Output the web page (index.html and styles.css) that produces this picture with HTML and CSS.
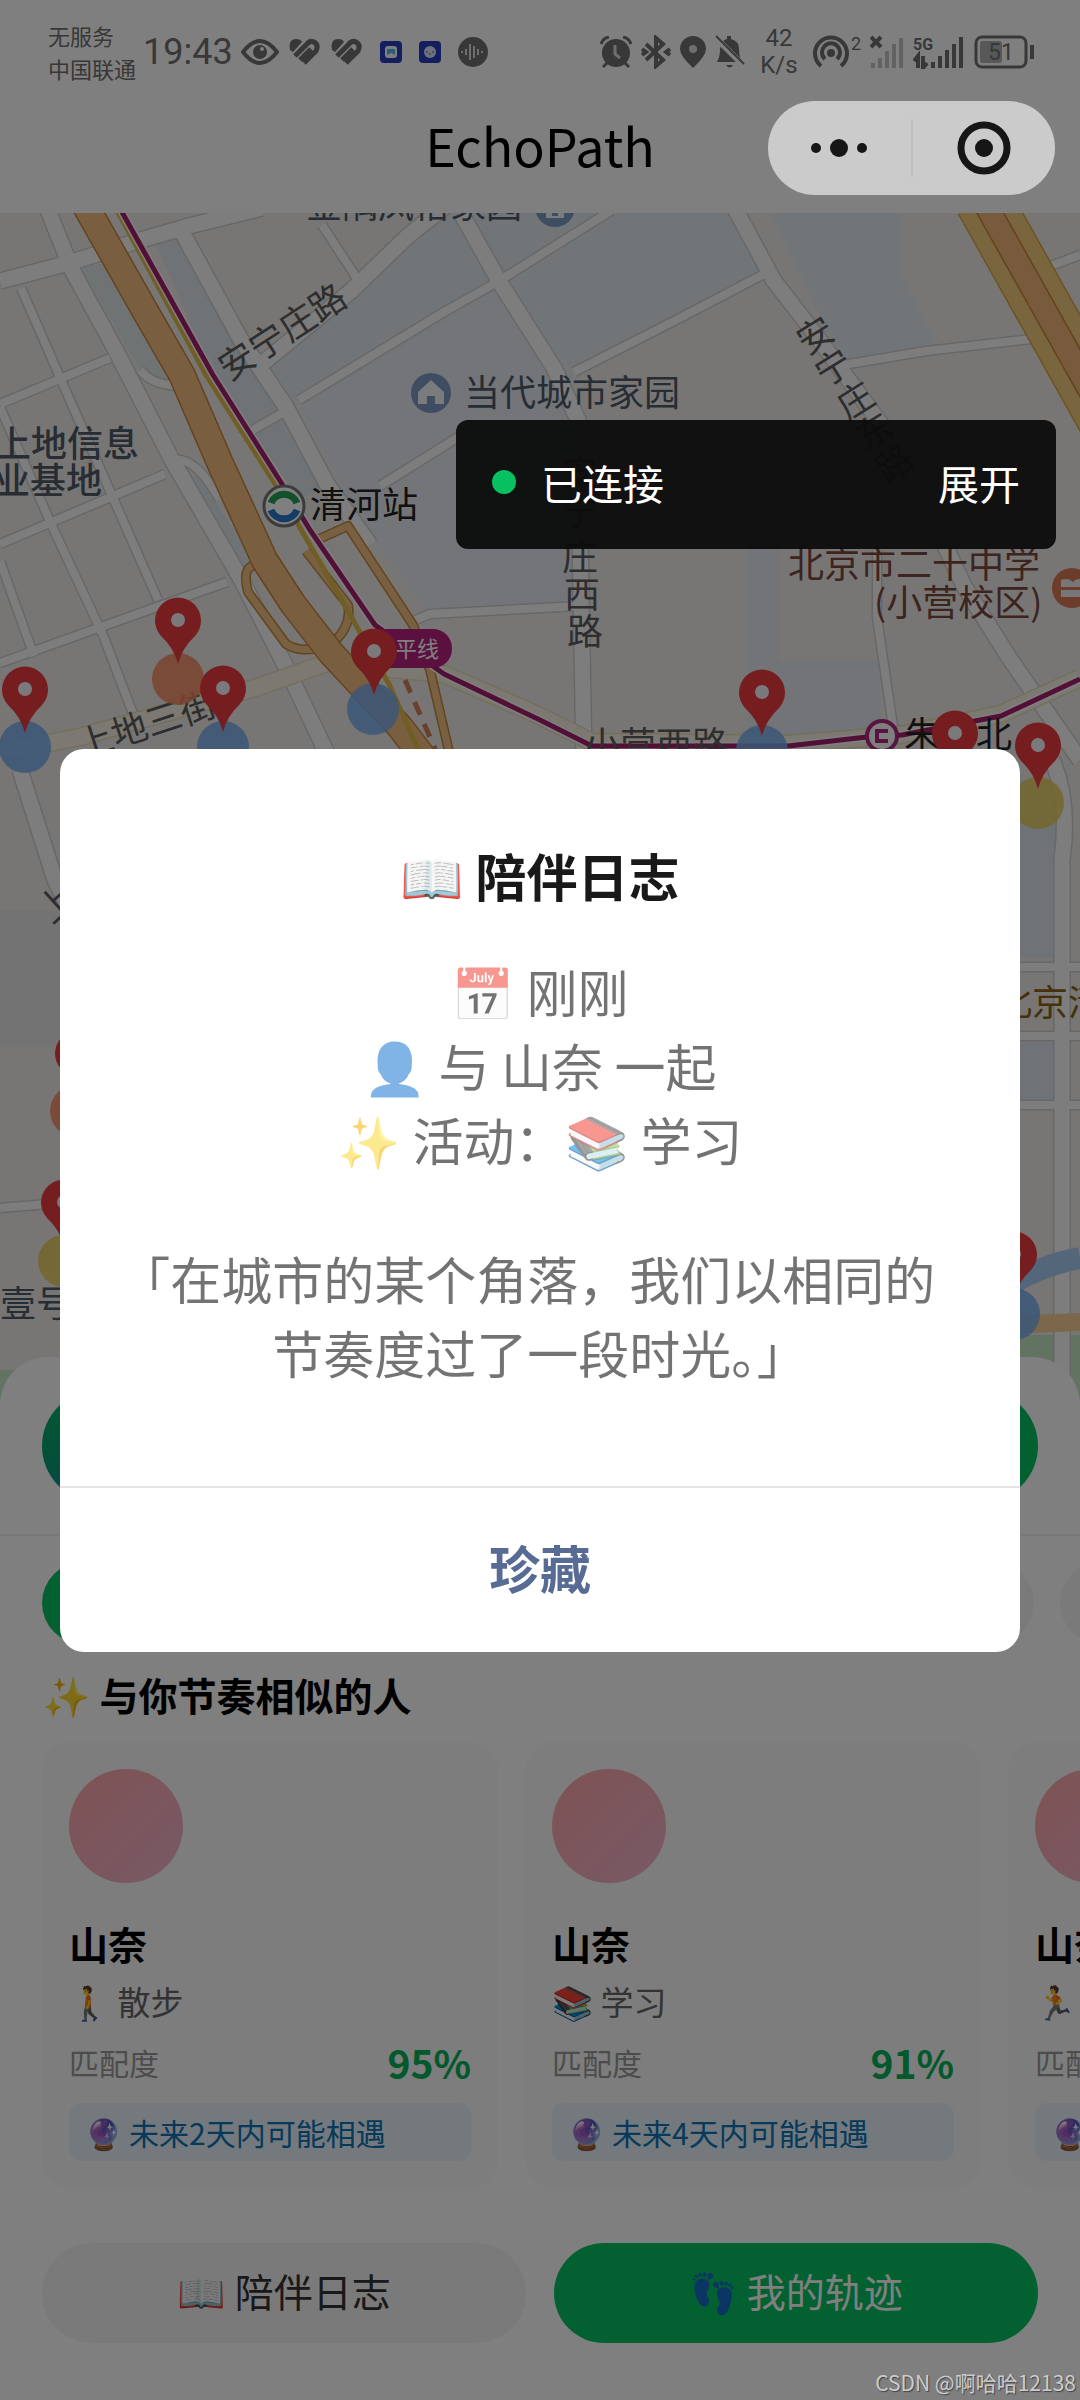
FILE: index.html
```html
<!DOCTYPE html>
<html lang="zh-CN">
<head>
    <meta charset="UTF-8">
    <meta name="viewport" content="width=device-width, initial-scale=1.0">
    <title>EchoPath</title>
    <link rel="stylesheet" href="styles.css">
</head>
<body>
    <div class="page">
        <div class="status-bar">
            <div class="carrier"><span>无服务</span><span>中国联通</span></div>
            <div class="clock">19:43</div>
            <div class="status-icons">
                <svg width="38" height="28" viewBox="0 0 38 28"><path d="M2 14Q19-8 36 14Q19 36 2 14Z" fill="none" stroke="currentColor" stroke-width="4"/><circle cx="19" cy="14" r="7" fill="currentColor"/><circle cx="21" cy="11" r="2" fill="#fff"/></svg>
                <svg width="32" height="28" viewBox="0 0 32 28"><path d="M1 12Q-1 1 7 1Q12 1 13 4L4 14Z" fill="currentColor"/><path d="M6 18L18 6Q21 2 25 4Q30 7 27 13L15 25M11 22L22 11" fill="none" stroke="currentColor" stroke-width="5"/></svg>
                <svg width="32" height="28" viewBox="0 0 32 28"><path d="M1 12Q-1 1 7 1Q12 1 13 4L4 14Z" fill="currentColor"/><path d="M6 18L18 6Q21 2 25 4Q30 7 27 13L15 25M11 22L22 11" fill="none" stroke="currentColor" stroke-width="5"/></svg>
                <svg class="app-icon" width="22" height="22" viewBox="0 0 22 22"><rect width="22" height="22" rx="4" fill="#2a3cbe"/><rect x="5" y="5" width="12" height="12" rx="3" fill="#fff"/><path d="M7 8H15V14L11 12L7 14Z" fill="#54b8f0"/></svg>
                <svg class="app-icon" width="22" height="22" viewBox="0 0 22 22"><rect width="22" height="22" rx="4" fill="#2a3cbe"/><circle cx="11" cy="11" r="6" fill="#dde4ff"/><path d="M8 10V12M14 10V12M10 13H12" stroke="#556"/></svg>
                <svg class="app-icon" width="30" height="30" viewBox="0 0 30 30"><circle cx="15" cy="15" r="15" fill="currentColor"/><path d="M4 14V16M8 12V18M12 7V23M16 9V21M20 12V18M24 14V16" stroke="#ddd" stroke-width="2"/></svg>
            </div>
            <div class="status-right">
                <svg width="32" height="32" viewBox="0 0 32 32"><circle cx="16" cy="17" r="14" fill="currentColor"/><path d="M1 8Q3 2 9 1M31 8Q29 2 23 1M7 27L3 31M25 27L29 31" stroke="currentColor" stroke-width="3" fill="none"/><path d="M15 9V18L20 22" stroke="#ddd" stroke-width="3" fill="none"/></svg>
                <svg width="30" height="34" viewBox="0 0 30 34"><path d="M5 9L22 25L15 31V3L22 9L5 25M1 14L5 17L1 20M29 14L25 17L29 20" fill="none" stroke="currentColor" stroke-width="4"/></svg>
                <svg width="26" height="32" viewBox="0 0 26 32"><path d="M13 32Q0 20 0 13A13 13 0 0 1 26 13Q26 20 13 32Z" fill="currentColor"/><circle cx="13" cy="13" r="4" fill="#ddd"/></svg>
                <svg width="30" height="34" viewBox="0 0 30 34"><path d="M2 27Q5 22 5 14Q6 5 12 4V1H16V4Q24 6 24 14Q24 22 27 27ZM11 30H18Q15 35 11 30Z" fill="currentColor"/><path d="M1 3L28 30" stroke="#fff" stroke-width="6"/><path d="M1 1L29 29" stroke="currentColor" stroke-width="2"/></svg>
                <div class="speed"><span>42</span><span>K/s</span></div>
                <svg width="48" height="34" viewBox="0 0 48 34"><path d="M8 31A16 16 0 1 1 28 31M12 24A9 9 0 1 1 24 24" fill="none" stroke="currentColor" stroke-width="4"/><circle cx="18" cy="18" r="4" fill="currentColor"/><text x="38" y="15" font-size="18" fill="currentColor">2</text></svg>
                <svg width="34" height="34" viewBox="0 0 34 34"><path d="M3 28V33M10 23V33M17 16V33M24 9V33M31 3V33" stroke="#c4c4c4" stroke-width="4"/><path d="M1 2L11 12M11 2L1 12" stroke="currentColor" stroke-width="4"/></svg>
                <svg width="52" height="34" viewBox="0 0 52 34"><text x="0" y="15" font-size="16" font-weight="700" fill="currentColor">5G</text><path d="M1 26L5 21V33M10 21V33L14 28M20 27V33M27 21V33M34 15V33M41 9V33M48 2V33" fill="none" stroke="currentColor" stroke-width="4"/></svg>
                <svg width="62" height="34" viewBox="0 0 62 34"><rect x="2" y="2" width="50" height="30" rx="6" fill="none" stroke="currentColor" stroke-width="3"/><rect x="6" y="6" width="22" height="22" rx="3" fill="#b0b0b0"/><path d="M58 10V24" stroke="currentColor" stroke-width="4"/><text x="14" y="25" font-size="23" fill="currentColor">51</text></svg>
            </div>
        </div>
        <header class="nav-bar"><h1>EchoPath</h1></header>

        <div class="map">
            <svg viewBox="0 213 1080 1200" preserveAspectRatio="xMidYMin slice">
                <defs>
                    <g id="pin">
                        <path d="M0 44Q-4 28-17 16A23 23 0 1 1 17 16Q4 28 0 44Z" fill="#ec3b40"/>
                        <circle r="7" fill="#f4f4f8"/>
                    </g>
                </defs>
                <rect y="213" width="1080" height="1200" fill="#efedeb"/>
                <!-- districts -->
                <path d="M350 213H733L764 274L574 372L540 347L299 400L284 407L241 340L350 291Z" fill="#e5ebf1"/>
                <path d="M152 235L182 225L258 365L327 484L300 500L213 375Z" fill="#dfe6ea"/>
                <path d="M80 266L120 262L190 380L170 385L140 370Z" fill="#dfe6e8"/>
                <path d="M299 407L499 290L574 372V605L430 614L370 537Z" fill="#e7ebf0"/>
                <path d="M190 213H447L351 291L258 365L190 240Z" fill="#efede9"/>
                <path d="M770 213H900V270L940 351L843 362Z" fill="#e5eaef"/>
                <path d="M748 545H780V660H880V735H748Z" fill="#e4e8f0"/>
                <path d="M180 480Q200 465 215 500L258 570L240 572Z" fill="#dfe6ea"/>
                <path d="M0 910H60V1045H0Z" fill="#e6e6e6"/>
                <path d="M1012 780H1058V958H1012ZM1012 1042H1055V1100H1012Z" fill="#dfe5ec"/>
                <path d="M1000 1335H1080V1413H1000ZM0 1370H60V1413H0Z" fill="#c5e6c4"/>
                <!-- streets -->
                <g fill="none" stroke="#cfcfd1" stroke-linejoin="round">
                    <path stroke-width="18" d="M48 210L72 270L114 347L172 460L241 579L286 667L330 760M182 232L241 340L286 407L327 484L370 545M461 213L499 281L554 368L578 420L584 760M733 205L774 281L812 330L900 450L964 586L1008 656L1080 760M0 281L69 263L144 239L193 225L262 208M258 367L351 291L409 235L447 205M20 770L55 880L80 930M1052 760Q1070 800 1062 860V1420"/>
                    <path stroke-width="11" d="M0 404L110 358M0 544L165 474M0 663L227 582M21 288L62 382L158 600M0 407L52 526L103 635L138 727M0 561L34 656M299 400L444 312L499 281L612 210M574 372L678 319L764 274M843 365L926 351L1040 338M877 550V618L895 740M413 621L430 614L580 606M322 225L358 280M140 370Q155 388 185 385M172 460Q195 455 220 500M241 437L284 412M380 486L460 436M1000 967H1080M1000 1036H1080M1000 1105H1080M0 1208L60 1203M1040 270L1080 255"/>
                </g>
                <g fill="none" stroke="#fbfbfc" stroke-linejoin="round">
                    <path stroke-width="15" d="M48 210L72 270L114 347L172 460L241 579L286 667L330 760M182 232L241 340L286 407L327 484L370 545M461 213L499 281L554 368L578 420L584 760M733 205L774 281L812 330L900 450L964 586L1008 656L1080 760M0 281L69 263L144 239L193 225L262 208M258 367L351 291L409 235L447 205M20 770L55 880L80 930M1052 760Q1070 800 1062 860V1420"/>
                    <path stroke-width="8" d="M0 404L110 358M0 544L165 474M0 663L227 582M21 288L62 382L158 600M0 407L52 526L103 635L138 727M0 561L34 656M299 400L444 312L499 281L612 210M574 372L678 319L764 274M843 365L926 351L1040 338M877 550V618L895 740M413 621L430 614L580 606M322 225L358 280M140 370Q155 388 185 385M172 460Q195 455 220 500M241 437L284 412M380 486L460 436M1000 967H1080M1000 1036H1080M1000 1105H1080M0 1208L60 1203M1040 270L1080 255"/>
                </g>
                <path d="M0 752L80 737L255 688L327 663L444 674L540 716L592 742L788 744L900 735L1001 714L1080 678" fill="none" stroke="#e6dfb8" stroke-width="19"/>
                <path d="M0 752L80 737L255 688L327 663L444 674L540 716L592 742L788 744L900 735L1001 714L1080 678" fill="none" stroke="#f6f3e2" stroke-width="16"/>
                <path d="M1000 1290Q1040 1265 1080 1258" fill="none" stroke="#a8cdf5" stroke-width="22"/>
                <path d="M1000 1325L1080 1322" fill="none" stroke="#f6cf92" stroke-width="18"/>
                <!-- expressway and ramps -->
                <g fill="none" stroke-linejoin="round">
                    <path d="M262 565Q240 562 248 592L286 644Q305 656 334 642M317 540L348 526L413 625L430 670L451 760M306 551L348 605Q352 625 334 642" stroke="#c08a3a" stroke-width="10"/>
                    <path d="M262 565Q240 562 248 592L286 644Q305 656 334 642M317 540L348 526L413 625L430 670L451 760M306 551L348 605Q352 625 334 642" stroke="#f4c184" stroke-width="7"/>
                    <path d="M85 205L148 316L182 375L220 463L265 561L293 604L331 653L400 727L427 762" stroke="#c9853c" stroke-width="28"/>
                    <path d="M85 205L148 316L182 375L220 463L265 561L293 604L331 653L400 727L427 762" stroke="#f3bf80" stroke-width="25"/>
                    <path d="M983 200L1185 560" stroke="#d9a745" stroke-width="58"/>
                    <path d="M983 200L1185 560" stroke="#f4cc7c" stroke-width="55"/>
                    <path d="M983 200L1185 560" stroke="#c9853c" stroke-width="25"/>
                    <path d="M983 200L1185 560" stroke="#eeb778" stroke-width="22"/>
                    <path d="M405 680L440 760" stroke="#d08058" stroke-width="5" stroke-dasharray="14 10"/>
                    <path d="M114 205L206 375L275 484L303 533L344 604L389 684L423 760" stroke="#e0bd48" stroke-width="5"/>
                    <path d="M118 205L213 375L282 484L310 530L375 625L444 674L540 720L592 746L788 746L867 737L902 735L1001 716L1080 679" stroke="#fff" stroke-width="8"/>
                    <path d="M118 205L213 375L282 484L310 530L375 625L444 674L540 720L592 746L788 746L867 737L902 735L1001 716L1080 679" stroke="#a5206f" stroke-width="5"/>
                </g>
                <!-- place names -->
                <g class="map-label">
                    <text x="306" y="218">金隅凤怡家园</text>
                    <text x="464" y="406">当代城市家园</text>
                    <text class="dark" x="310" y="518">清河站</text>
                    <text class="district" x="-5" y="457">上地信息</text>
                    <text class="district" x="-6" y="494">业基地</text>
                    <text class="road" transform="translate(229 382) rotate(-33)">安宁庄路</text>
                    <text class="road" transform="translate(82 759) rotate(-18)">上地三街</text>
                    <text class="road" x="807 825 847 866 886" y="356 388 421 452 484" rotate="-32">安宁庄东路</text>
                    <text class="road" x="562 562 562 564 567" y="486 525 570 608 645">安宁庄西路</text>
                    <text class="road" x="584" y="758">小营西路</text>
                    <text class="road" transform="translate(52 925) rotate(-42)">上</text>
                    <text class="school" x="788" y="578">北京市二十中学</text>
                    <text class="school" x="874" y="616">(小营校区)</text>
                    <text class="dark" x="904" y="748">朱房北</text>
                    <text class="gold" x="996" y="1016">北京清</text>
                    <text x="0" y="1317">壹号</text>
                </g>
                <g fill="#7f9bc4">
                    <circle cx="431" cy="393" r="20"/>
                    <circle cx="555" cy="207" r="20"/>
                </g>
                <path d="M431 380L444 392V404H435V396H427V404H418V392Z" fill="#f4f6fa"/>
                <path d="M546 210H552V216H558V210H564V218H546Z" fill="#f4f6fa"/>
                <circle cx="284" cy="506" r="20" fill="#fff" stroke="#777" stroke-width="3"/>
                <path d="M271 503A14 14 0 0 1 297 503" fill="none" stroke="#23a058" stroke-width="7"/>
                <path d="M271 510A14 14 0 0 0 297 510" fill="none" stroke="#2878cc" stroke-width="7"/>
                <circle cx="1072" cy="588" r="20" fill="#d97a55"/>
                <path d="M1061 580Q1068 577 1073 582Q1077 577 1084 580V587H1061ZM1061 590H1084V597H1061Z" fill="#eee"/>
                <rect x="360" y="629" width="92" height="39" rx="19" fill="#b8217e"/>
                <text x="395" y="657" class="line-name">平线</text>
                <circle cx="882" cy="736" r="15" fill="#fff" stroke="#b02a80" stroke-width="4"/>
                <path d="M888 731H877V741H888" fill="none" stroke="#b02a80" stroke-width="4"/>
                <!-- visits -->
                <g opacity="0.85">
                    <circle cx="178" cy="679" r="26" fill="#f5875f"/>
                    <circle cx="25" cy="747" r="26" fill="#77aef0"/>
                    <circle cx="223" cy="747" r="26" fill="#77aef0"/>
                    <circle cx="373" cy="709" r="26" fill="#77aef0"/>
                    <circle cx="762" cy="751" r="26" fill="#77aef0"/>
                    <circle cx="1038" cy="803" r="26" fill="#e8cc58"/>
                    <circle cx="76" cy="1111" r="26" fill="#f5875f"/>
                    <circle cx="64" cy="1261" r="26" fill="#e8cc58"/>
                    <circle cx="1014" cy="1314" r="26" fill="#77aef0"/>
                </g>
                <use href="#pin" x="178" y="620"/>
                <use href="#pin" x="25" y="689"/>
                <use href="#pin" x="223" y="688"/>
                <use href="#pin" x="374" y="651"/>
                <use href="#pin" x="762" y="692"/>
                <use href="#pin" x="955" y="733"/>
                <use href="#pin" x="1038" y="745"/>
                <use href="#pin" x="78" y="1053"/>
                <use href="#pin" x="64" y="1202"/>
                <use href="#pin" x="1014" y="1254"/>
            </svg>
        </div>

        <main class="sheet">
            <div class="sheet-top"><button class="main-btn" aria-label="开始"></button></div>
            <div class="chips">
                <button class="chip active" aria-label="全部"></button>
                <button class="chip" aria-label="附近"></button>
                <button class="chip short" aria-label="更多"></button>
            </div>
            <h2 class="section-title">✨ 与你节奏相似的人</h2>
            <div class="cards">
                <div class="card">
                    <div class="avatar"></div>
                    <h3>山奈</h3>
                    <p class="activity">🚶 散步</p>
                    <div class="match"><span>匹配度</span><strong>95%</strong></div>
                    <p class="meet">🔮 未来2天内可能相遇</p>
                </div>
                <div class="card">
                    <div class="avatar"></div>
                    <h3>山奈</h3>
                    <p class="activity">📚 学习</p>
                    <div class="match"><span>匹配度</span><strong>91%</strong></div>
                    <p class="meet">🔮 未来4天内可能相遇</p>
                </div>
                <div class="card">
                    <div class="avatar"></div>
                    <h3>山奈</h3>
                    <p class="activity">🏃 跑步</p>
                    <div class="match"><span>匹配度</span><strong>90%</strong></div>
                    <p class="meet">🔮 未来3天内可能相遇</p>
                </div>
            </div>
            <div class="actions">
                <button class="action-btn">📖 陪伴日志</button>
                <button class="action-btn primary">👣 我的轨迹</button>
            </div>
        </main>
    </div>

    <div class="mask">
        <div class="modal" role="dialog" aria-labelledby="modalTitle">
            <div class="modal-body">
                <h2 id="modalTitle">📖 陪伴日志</h2>
                <p>📅 刚刚<br>👤 与 山奈 一起<br>✨ 活动：📚 学习</p>
                <p class="quote">「在城市的某个角落，我们以相同的节奏度过了一段时光。」</p>
            </div>
            <button class="modal-btn">珍藏</button>
        </div>
    </div>

    <div class="capsule">
        <button aria-label="更多"><svg width="58" height="20" viewBox="0 0 58 20"><circle cx="6" cy="10" r="5"/><circle cx="29" cy="10" r="9"/><circle cx="52" cy="10" r="5"/></svg></button>
        <button aria-label="关闭"><svg width="54" height="54" viewBox="0 0 54 54"><circle cx="27" cy="27" r="23" fill="none" stroke="#161616" stroke-width="7"/><circle cx="27" cy="27" r="9"/></svg></button>
    </div>
    <div class="debug-panel">
        <span class="dot"></span>
        <span>已连接</span>
        <button>展开</button>
    </div>
    <div class="watermark">CSDN @啊哈哈12138</div>
</body>
</html>
```

FILE: styles.css
```css
* { margin: 0; padding: 0; box-sizing: border-box; }
body { font-family: "Noto Sans CJK SC", "Noto Color Emoji", sans-serif; background-color: #fff; color: #000; position: relative; }
button { font-family: inherit; border: none; background: none; cursor: pointer; }
svg { display: block; flex-shrink: 0; }

.page { min-height: 100vh; display: flex; flex-direction: column; overflow: hidden; }

/* status bar */
.status-bar { height: 100px; padding: 4px 44px 0 48px; display: flex; align-items: center; color: #707070; }
.carrier { display: flex; flex-direction: column; width: 95px; font-size: 22px; line-height: 33px; white-space: nowrap; }
.clock { width: 98px; font-family: Roboto, sans-serif; font-size: 36px; }
.status-icons { display: flex; align-items: center; gap: 10px; }
.app-icon { margin-left: 7px; }
.status-right { margin-left: auto; display: flex; align-items: center; gap: 9px; font-family: Roboto, sans-serif; }
.speed { display: flex; flex-direction: column; align-items: center; width: 50px; font-size: 24px; line-height: 27px; }

.nav-bar { height: 113px; display: flex; align-items: center; justify-content: center; }
.nav-bar h1 { font-size: 52px; line-height: 90px; font-weight: 400; padding-bottom: 23px; }

/* map */
.map { flex: 1; position: relative; min-height: 400px; overflow: hidden; }
.map svg { position: absolute; top: 0; left: 0; width: 100%; height: 100%; }
.map-label { font-size: 36px; fill: #4c5a68; }
.map-label .dark { fill: #222; }
.map-label .road { fill: #5c5c5c; }
.map-label .district { fill: #4e5a66; font-weight: 500; }
.map-label .school { fill: #7a483e; }
.map-label .gold { fill: #8a6414; }
.line-name { font-size: 22px; fill: #fff; }

/* bottom sheet */
.sheet { position: relative; margin-top: -48px; background-color: #fff; border-radius: 48px 48px 0 0; padding-bottom: 57px; }
.sheet-top { padding: 33px 42px 32px; border-bottom: 2px solid #f0f0f0; }
.main-btn { display: block; width: 100%; height: 112px; border-radius: 56px; background: linear-gradient(20deg, #0a8aa0, #07a070 10%, #07b86a 30%, #07c160 60%); }
.chips { display: flex; gap: 26px; padding: 26px 0 0 42px; overflow: hidden; }
.chip { height: 82px; flex: none; border-radius: 41px; background-color: #f5f5f5; width: 466px; }
.chip.active { background-color: #07c160; width: 500px; }
.chip.short { width: 160px; }
.section-title { font-size: 39px; line-height: 56px; padding: 22px 42px 20px; }
.cards { display: flex; gap: 27px; padding: 0 42px; overflow: hidden; }
.card { flex: none; width: 456px; padding: 27px; border-radius: 28px; background-color: #fafafa; }
.avatar { width: 114px; height: 114px; border-radius: 50%; background: linear-gradient(135deg, #fda5a8, #f0b4cc); }
.card h3 { font-size: 39px; line-height: 56px; padding-top: 32px; }
.activity { font-size: 33px; line-height: 60px; color: #666; }
.match { display: flex; justify-content: space-between; align-items: center; font-size: 30px; line-height: 62px; color: #999; }
.match strong { font-size: 39px; color: #07b058; }
.meet { margin-top: 10px; padding: 0 16px; font-size: 30px; line-height: 58px; border-radius: 12px; color: #0e72b4; background-color: #e6f2fa; white-space: nowrap; }
.actions { display: flex; gap: 28px; padding: 55px 42px 0; }
.action-btn { flex: 1; height: 100px; padding-bottom: 6px; border-radius: 50px; font-size: 39px; color: #333; background-color: #f5f5f5; }
.action-btn.primary { background-color: #07c160; color: #fff; }

/* dialog */
.mask { position: absolute; top: 0; right: 0; bottom: 0; left: 0; display: flex; align-items: center; justify-content: center; padding: 0 60px; background-color: rgba(0, 0, 0, 0.5); }
.modal { width: 100%; border-radius: 24px; background-color: #fff; overflow: hidden; text-align: center; }
.modal-body { padding: 89px 72px 97px; font-size: 51px; line-height: 74px; color: rgba(0, 0, 0, 0.55); }
.modal-body h2 { font-size: 51px; line-height: 74px; color: rgba(0, 0, 0, 0.9); margin-bottom: 42px; }
.modal-body .quote { margin-top: 65px; text-spacing-trim: trim-start; }
.modal-btn { display: block; width: 100%; height: 166px; padding-bottom: 6px; border-top: 2px solid #e5e5e5; font-size: 51px; font-weight: 700; color: #576b95; }

/* floating controls */
.capsule { position: absolute; top: 101px; right: 25px; width: 287px; height: 94px; display: flex; align-items: center; border-radius: 47px; background-color: #cbcbcb; }
.capsule button { flex: 1; height: 58px; display: flex; align-items: center; justify-content: center; }
.capsule button + button { border-left: 2px solid #bdbdbd; }
.capsule svg { fill: #161616; }
.debug-panel { position: absolute; top: 420px; right: 24px; width: 600px; height: 129px; padding: 0 36px 6px; display: flex; align-items: center; border-radius: 12px; background-color: rgba(13, 13, 13, 0.96); color: #fff; font-size: 41px; }
.dot { width: 24px; height: 24px; margin-right: 25px; border-radius: 50%; background-color: #07c160; }
.debug-panel button { margin-left: auto; color: #fff; font-size: 41px; }
.watermark { position: absolute; right: 4px; bottom: 4px; font-size: 21px; line-height: 28px; color: #ccc; text-shadow: 1px 1px 1px #444; }
```
